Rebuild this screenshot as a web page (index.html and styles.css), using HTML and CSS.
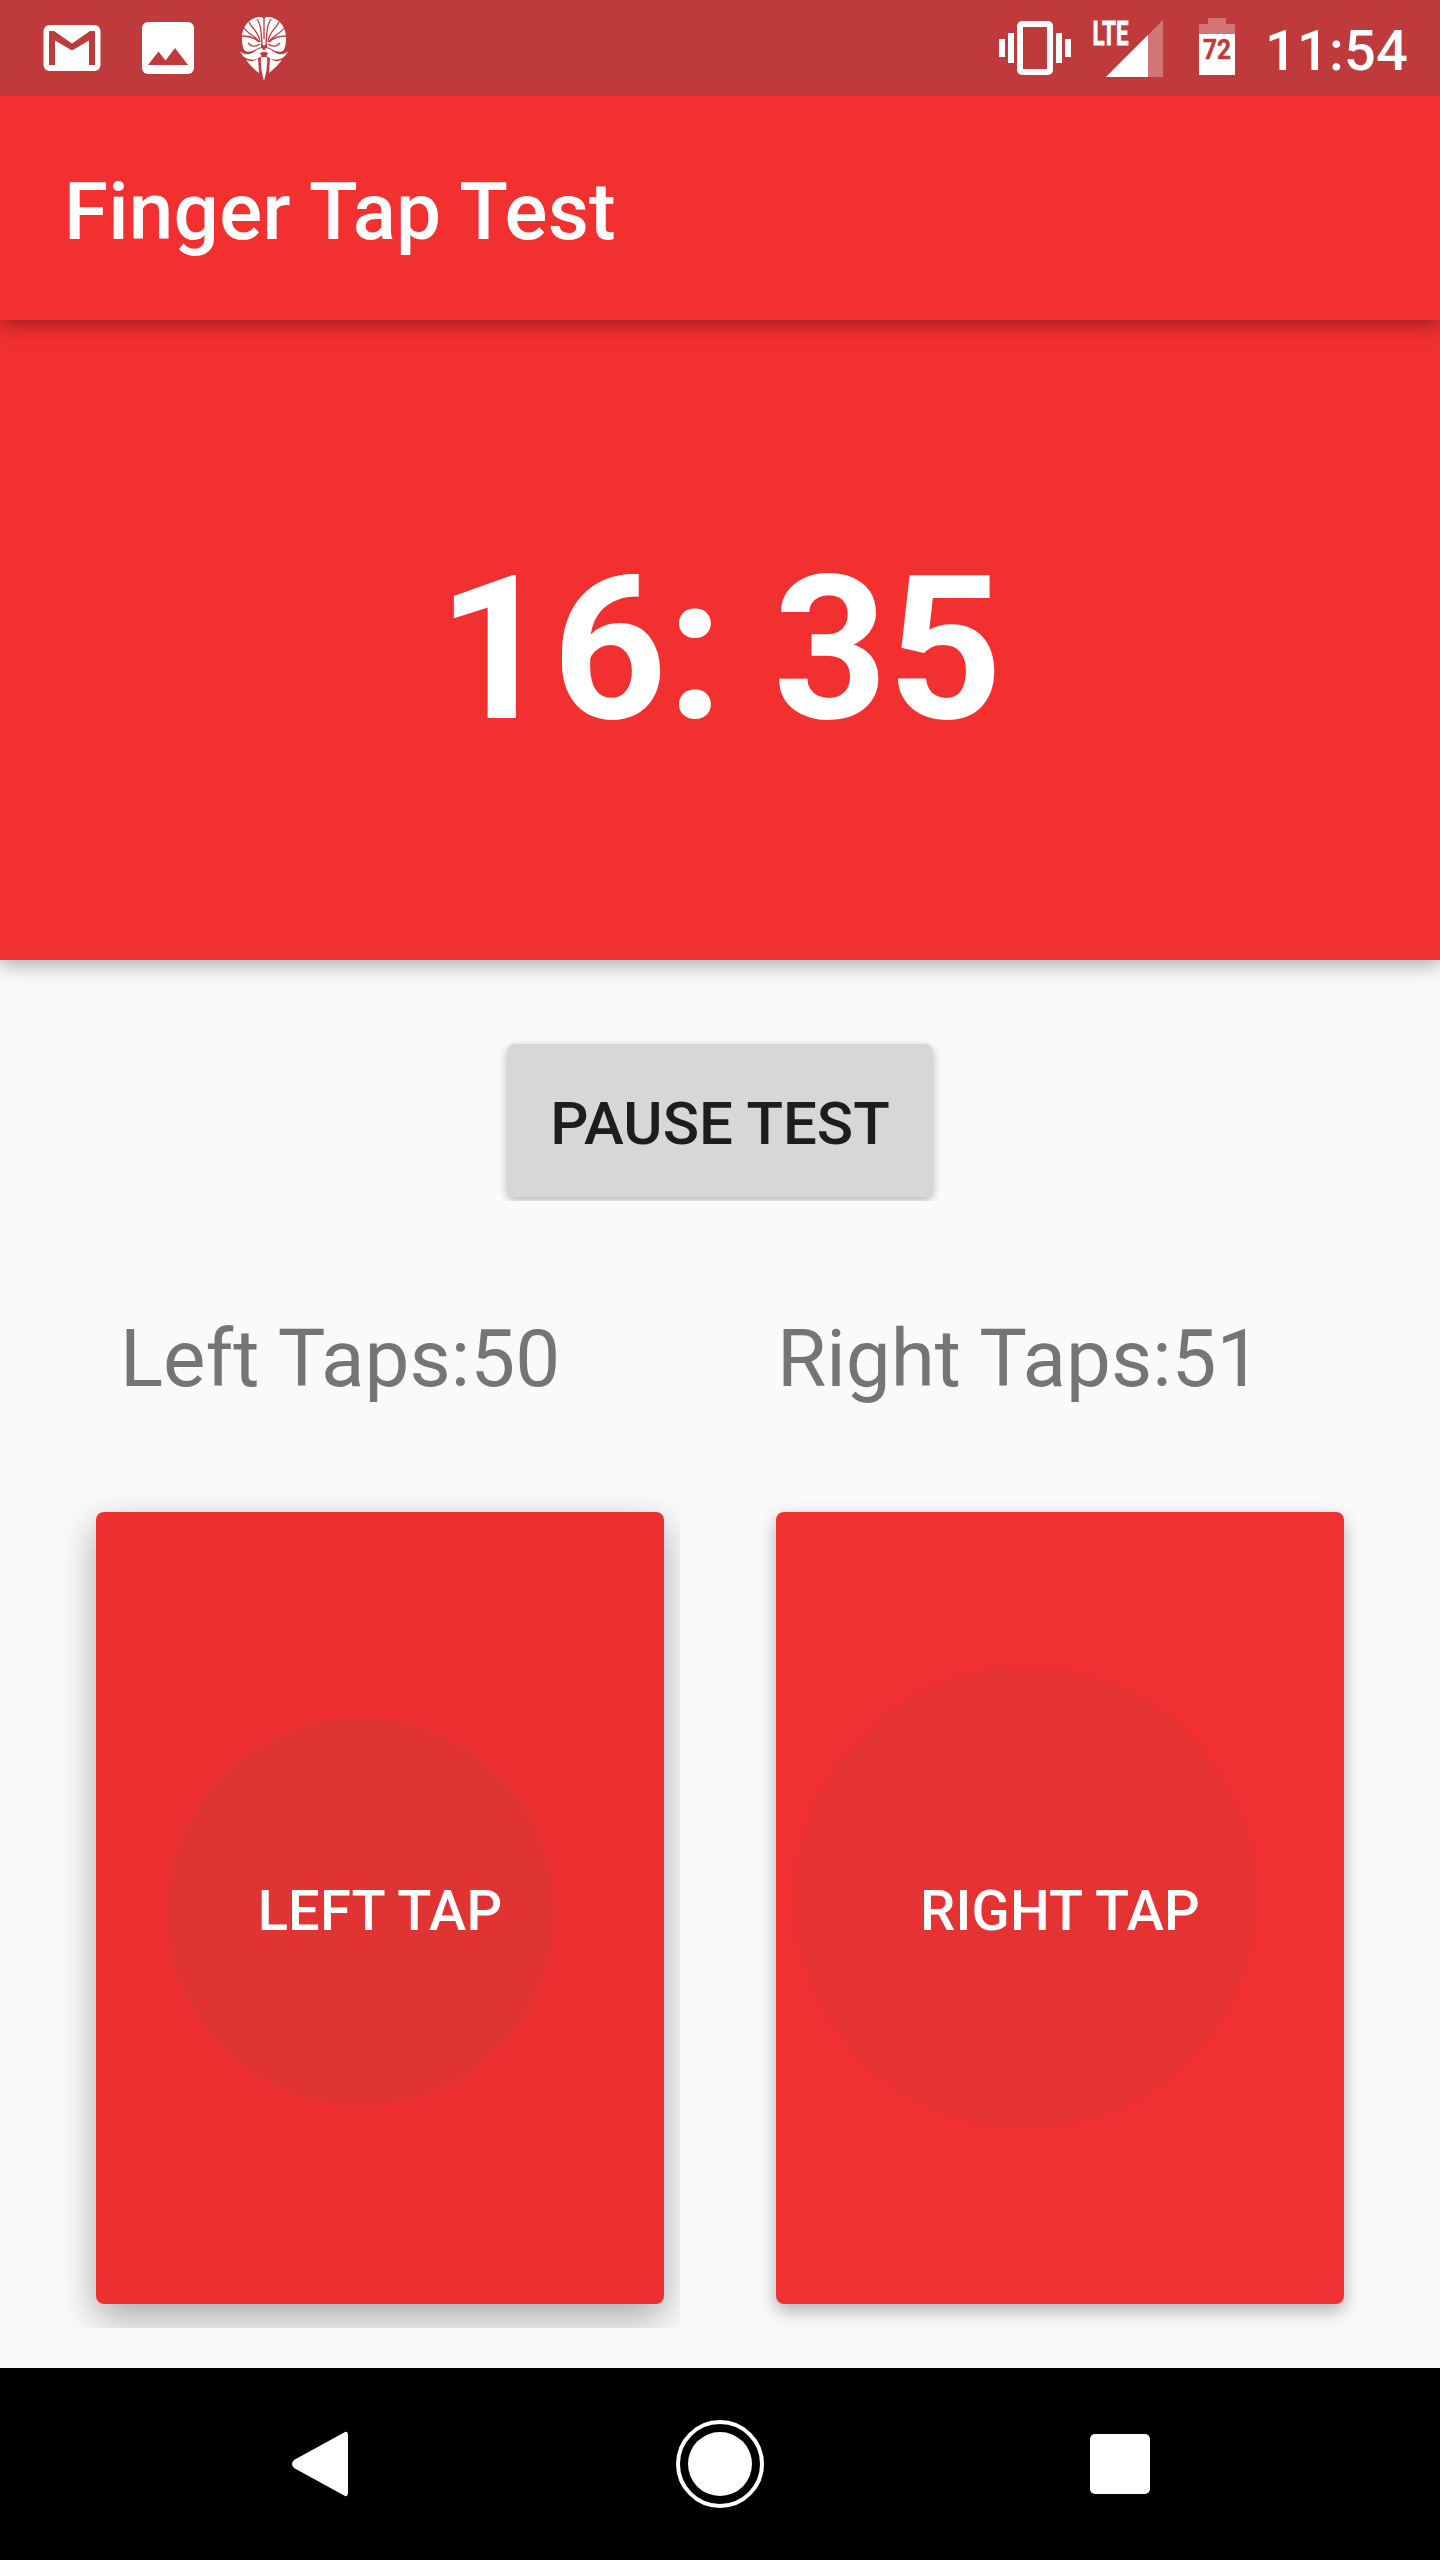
FILE: index.html
```html
<!DOCTYPE html>
<html lang="en">
<head>
<meta charset="utf-8">
<title>Finger Tap Test</title>
<link rel="stylesheet" href="styles.css">
</head>
<body>
<div class="screen">
  <div class="status">
    <svg class="notifications" width="300" height="96" viewBox="0 0 300 96">
      <rect x="43.5" y="25" width="57" height="46" rx="6" fill="#fff"/>
      <path d="M49 31h5l18 12.500 18-12.500h5v34h-6V40.500L72 50.500 55 40.500V65h-6z" fill="#bf3a3a"/>
      <rect x="142" y="22" width="52" height="52" rx="6" fill="#fff"/>
      <path d="M148 65l10.500-13.500 7 9L175 48l13 17z" fill="#bf3a3a"/>
      <path d="M262 17c-10-1-19 7-20 19 0 6 0 11 3 15 5 2 10-1 14-3h10c4 2 9 5 14 3 3-4 3-9 3-15-1-12-10-20-20-19l-2 2z" fill="#fff"/>
      <g stroke="#bf3a3a" stroke-width="1.300" fill="none">
        <path d="M264 18v21M257 19c4 6 4 12 5 24M271 19c-4 6-4 12-5 24M249 22c4 8 10 10 11 20M279 22c-4 8-10 10-11 20M244 28c4 6 12 8 15 14M284 28c-4 6-12 8-15 14M242 36c6 0 12 1 17 6M286 36c-6 0-12 1-17 6"/>
        <path d="M248 43c3 4 8 4 12 1M280 43c-3 4-8 4-12 1"/>
      </g>
      <path d="M261 42l3 4 3-4v7h-6z" fill="#bf3a3a"/>
      <path d="M239 50c6 6 12 4 17 0 4-3 7-3 8 0 1-3 4-3 8 0 5 4 11 6 17 0-3 8-9 11-16 10-4-1-6-4-9-4s-5 3-9 4c-7 1-13-2-16-10z" fill="#fff" stroke="#bf3a3a" stroke-width="1"/>
      <path d="M260 53q4-2 8 0l-2 4h-4z" fill="#bf3a3a"/>
      <path d="M246 60q8 3 12-2l1 15q-7-5-13-13zM282 60q-8 3-12-2l-1 15q7-5 13-13zM261 57h6q1 12-3 24-4-12-3-24z" fill="#fff"/>
    </svg>
    <svg class="signals" width="248" height="96" viewBox="0 0 248 96">
      <rect x="20" y="24" width="30" height="48" rx="2" fill="none" stroke="#fff" stroke-width="6"/>
      <path d="M-1 39h6v18h-6zM8 33h6v30H8zM56 33h6v30h-6zM65 39h6v18h-6z" fill="#fff"/>
      <text class="lte" x="92.500" y="45" textLength="36" lengthAdjust="spacingAndGlyphs">LTE</text>
      <path d="M163 20v57h-57z" fill="#fff" fill-opacity=".3"/>
      <path d="M148 35v42h-42z" fill="#fff"/>
      <path d="M208 18h18v6h9v10h-36V24h9z" fill="#fff" fill-opacity=".3"/>
      <path d="M199 34h36v41h-36z" fill="#fff"/>
      <text class="level" x="203" y="59" textLength="28" lengthAdjust="spacingAndGlyphs">72</text>
    </svg>
    <span class="clock">11:54</span>
  </div>
  <header class="appbar"><h1 class="title">Finger Tap Test</h1></header>
  <section class="timer">16: 35</section>
  <main class="content">
    <div class="pause-frame"><button class="pause">PAUSE TEST</button></div>
    <div class="counts"><span class="count">Left Taps:50</span><span class="count">Right Taps:51</span></div>
    <div class="pads">
      <div class="pad-frame"><button class="pad pad-left"><span class="ripple"></span><span class="label">LEFT TAP</span></button></div>
      <button class="pad pad-right"><span class="ripple"></span><span class="label">RIGHT TAP</span></button>
    </div>
  </main>
  <nav class="nav">
    <svg class="nav-icon" width="88" height="88" viewBox="0 0 88 88"><path d="M69 12q3-1 3 4v56q0 5-3 4L18 48q-4-4 0-8z" fill="#fff"/></svg>
    <svg class="nav-icon" width="88" height="88" viewBox="0 0 88 88"><circle cx="44" cy="44" r="42" fill="none" stroke="#fff" stroke-width="4"/><circle cx="44" cy="44" r="32" fill="#fff"/></svg>
    <svg class="nav-icon" width="88" height="88" viewBox="0 0 88 88"><rect x="14" y="14" width="60" height="60" rx="5" fill="#fff"/></svg>
  </nav>
</div>
</body>
</html>
```
FILE: styles.css
```css
* { box-sizing: border-box; }
body { margin: 0; font-family: Roboto, sans-serif; }
button { border: 0; padding: 0; margin: 0; font-family: inherit; }
.screen { width: 1440px; height: 2560px; display: flex; flex-direction: column; background: #fafafa; overflow: hidden; }
.status { flex: none; position: relative; z-index: 2; height: 96px; display: flex; align-items: center; background: #bf3a3a; color: #fff; }
.notifications { flex: none; }
.signals { flex: none; margin-left: 700px; overflow: visible; }
.clock { margin-left: 17px; padding-top: 6px; font-size: 56px; font-weight: 500; line-height: 66px; letter-spacing: .2px; white-space: nowrap; }
.lte { font: 700 34px Roboto, sans-serif; fill: #fff; stroke: #fff; stroke-width: .8px; }
.level { font: 700 28px Roboto, sans-serif; fill: #bf3a3a; stroke: #bf3a3a; stroke-width: .5px; }
.appbar { flex: none; height: 224px; display: flex; align-items: center; padding: 8px 0 0 64px; background: #f33030; color: #fff; position: relative; z-index: 1; box-shadow: 0 6px 18px rgba(0,0,0,.33); }
.title { margin: 0; font-size: 80px; font-weight: 500; line-height: 94px; letter-spacing: .2px; }
.timer { flex: none; height: 640px; display: flex; align-items: center; justify-content: center; padding-top: 20px; background: #f33030; color: #fff; font-size: 200px; font-weight: 700; line-height: 234px; box-shadow: 0 6px 18px rgba(0,0,0,.3); }
.content { flex: none; height: 1408px; display: flex; flex-direction: column; align-items: center; padding-top: 60px; }
.pause-frame { padding: 24px 24px 4px; overflow: hidden; }
.pause { display: block; width: 426px; height: 153px; border-radius: 8px; background: #d6d7d7; color: #1d1d1d; font-size: 60px; font-weight: 500; padding-top: 6px; box-shadow: 0 3px 8px rgba(0,0,0,.27); }
.counts { width: 1440px; height: 94px; margin-top: 111px; display: grid; grid-template-columns: 657px 1fr; padding-left: 120px; color: #757575; font-size: 80px; line-height: 94px; }
.pads { width: 1440px; display: flex; padding-left: 56px; margin-top: 66px; }
.pad-frame { width: 624px; padding: 40px 16px 24px 40px; overflow: hidden; }
.pad { position: relative; display: flex; align-items: center; justify-content: center; flex: none; width: 568px; height: 792px; border-radius: 8px; color: #fff; font-size: 56px; font-weight: 500; letter-spacing: .2px; overflow: visible; }
.pad-left { background: #ef3031; box-shadow: 0 14px 38px rgba(0,0,0,.33); }
.pad-right { margin: 40px 0 0 96px; background: #f13032; box-shadow: 0 7px 18px rgba(0,0,0,.3); }
.ripple { position: absolute; border-radius: 50%; }
.pad-left .ripple { left: 70px; top: 205px; width: 389px; height: 389px; background: #e03333; }
.pad-right .ripple { left: 19px; top: 155px; width: 461px; height: 461px; background: #e53333; }
.label { position: relative; padding-top: 5px; }
.nav { flex: none; height: 192px; display: flex; align-items: center; justify-content: center; gap: 312px; background: #000; }
```
